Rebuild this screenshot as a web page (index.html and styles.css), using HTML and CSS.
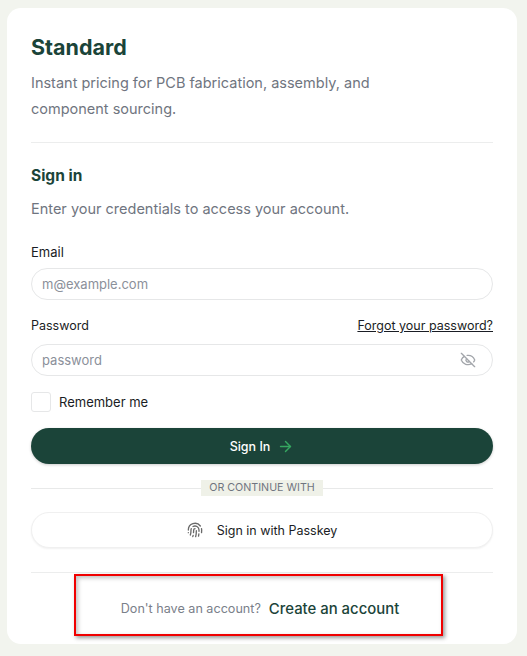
FILE: index.html
```html
<!DOCTYPE html>
<html lang="en">
<head>
  <meta charset="UTF-8" />
  <meta name="viewport" content="width=device-width, initial-scale=1.0"/>
  <title>Standard - Sign in</title>
  <link rel="stylesheet" href="styles.css">
</head>
<body>
  <div class="card">
    <h1>Standard</h1>
    <p class="intro">Instant pricing for PCB fabrication, assembly, and<br>component sourcing.</p>
    <hr class="rule">

    <h2>Sign in</h2>
    <p class="lead">Enter your credentials to access your account.</p>

    <form class="form">
      <div class="field">
        <label for="email">Email</label>
        <input type="text" id="email" placeholder="m@example.com" />
      </div>

      <div class="field field-password">
        <div class="label-row">
          <label for="password">Password</label>
          <a href="#">Forgot your password?</a>
        </div>
        <div class="input-wrap">
          <input type="text" id="password" placeholder="password" />
          <svg class="eye" viewBox="0 0 24 24" fill="none" stroke="currentColor" stroke-width="2" stroke-linecap="round" stroke-linejoin="round">
            <path d="M10.733 5.076a10.744 10.744 0 0 1 11.205 6.575 1 1 0 0 1 0 .696 10.747 10.747 0 0 1-1.444 2.49"/>
            <path d="M14.084 14.158a3 3 0 0 1-4.242-4.242"/>
            <path d="M17.479 17.499a10.75 10.75 0 0 1-15.417-5.151 1 1 0 0 1 0-.696 10.75 10.75 0 0 1 4.446-5.143"/>
            <path d="m2 2 20 20"/>
          </svg>
        </div>
      </div>

      <label class="remember">
        <span class="box"></span>
        Remember me
      </label>

      <button type="button" class="btn-primary">
        Sign In
        <svg viewBox="0 0 24 24" fill="none" stroke="#35a860" stroke-width="2" stroke-linecap="round" stroke-linejoin="round">
          <path d="M5 12h14"/>
          <path d="m12 5 7 7-7 7"/>
        </svg>
      </button>

      <div class="or"><span>OR CONTINUE WITH</span></div>

      <button type="button" class="btn-passkey">
        <svg viewBox="0 0 24 24" fill="none" stroke="#6a6a6a" stroke-width="2" stroke-linecap="round" stroke-linejoin="round">
          <path d="M12 10a2 2 0 0 0-2 2c0 1.02-.1 2.51-.26 4"/>
          <path d="M14 13.12c0 2.38 0 6.38-1 8.88"/>
          <path d="M17.29 21.02c.12-.6.43-2.3.5-3.02"/>
          <path d="M2 12a10 10 0 0 1 18-6"/>
          <path d="M2 16h.01"/>
          <path d="M21.8 16c.2-2 .131-5.354 0-6"/>
          <path d="M5 19.5C5.5 18 6 15 6 12a6 6 0 0 1 .34-2"/>
          <path d="M8.65 22c.21-.66.45-1.32.57-2"/>
          <path d="M9 6.8a6 6 0 0 1 9 5.2v2"/>
        </svg>
        Sign in with Passkey
      </button>
    </form>

    <hr class="rule rule-foot">

    <div class="foot">
      <span>Don't have an account?</span>
      <a href="#">Create an account</a>
    </div>

    <div class="callout"></div>
  </div>
</body>
</html>
```

FILE: styles.css
```css
* {
  box-sizing: border-box;
}

body {
  font-family: 'Inter', 'Liberation Sans', sans-serif;
  background: #f2f4ee;
  color: #1a1d24;
  margin: 0;
  padding: 8px 10px 12px 7px;
}

.card {
  position: relative;
  height: 636px;
  padding: 24px;
  background: #fff;
  border-radius: 14px;
}

h1 {
  margin: 0;
  font-size: 21.5px;
  line-height: 30px;
  font-weight: 700;
  color: #1b4439;
}

.intro {
  margin: 8px 0 0;
  font-size: 14.5px;
  line-height: 26px;
  color: #6f7580;
}

.rule {
  margin: 20px 0 0;
  border: none;
  border-top: 1px solid #eceded;
}

h2 {
  margin: 23px 0 0;
  font-size: 15.5px;
  line-height: 20px;
  font-weight: 700;
  color: #1b4439;
}

.lead {
  margin: 12px 0 0;
  font-size: 14.5px;
  line-height: 22px;
  color: #6f7580;
}

.form {
  display: flex;
  flex-direction: column;
  margin-top: 23px;
}

.field label,
.remember {
  font-size: 13px;
  line-height: 18px;
}

.field label {
  display: block;
}

.field-password label,
.label-row a {
  font-size: 12.5px;
}

.field input {
  display: block;
  width: 100%;
  height: 32px;
  margin-top: 7px;
  padding: 0 10px 1px;
  font-family: inherit;
  font-size: 13px;
  color: #1a1d24;
  background: #fff;
  border: 1px solid #e6e7e8;
  border-radius: 16px;
  outline: none;
}

.field input::placeholder {
  color: #8b909a;
  opacity: 1;
}

.field-password {
  margin-top: 17px;
}

.label-row {
  display: flex;
  justify-content: space-between;
  align-items: center;
  line-height: 18px;
}

.label-row a {
  color: #1a1d24;
}

.input-wrap {
  position: relative;
  padding-top: 2px;
}

.eye {
  position: absolute;
  right: 17px;
  top: 17px;
  width: 16px;
  height: 16px;
  color: #a3a6ab;
}

.remember {
  display: flex;
  align-items: center;
  gap: 8px;
  margin-top: 16px;
}

.box {
  width: 20px;
  height: 20px;
  border: 1px solid #e6e7e8;
  border-radius: 3px;
}

.btn-primary,
.btn-passkey {
  display: flex;
  align-items: center;
  justify-content: center;
  width: 100%;
  height: 36px;
  font-family: inherit;
  font-size: 12.5px;
  border-radius: 18px;
}

.btn-primary {
  gap: 7px;
  margin-top: 16px;
  color: #fff;
  font-weight: 500;
  background: #1b4439;
  border: none;
  box-shadow: 0 1px 3px rgba(0,0,0,0.2);
}

.btn-primary svg {
  width: 17px;
  height: 17px;
}

.or {
  display: flex;
  justify-content: center;
  margin-top: 16px;
  background: linear-gradient(#e8e9e9, #e8e9e9) center / 100% 1px no-repeat;
}

.or span {
  padding: 0 8px;
  font-size: 10.7px;
  line-height: 16px;
  color: #6f7580;
  background: #eff1e8;
}

.btn-passkey {
  gap: 14px;
  margin-top: 16px;
  color: #1a1d24;
  background: #fff;
  border: 1px solid #f0f0f0;
  box-shadow: 0 1px 2px rgba(0,0,0,0.06);
}

.btn-passkey svg {
  width: 16px;
  height: 16px;
}

.rule-foot {
  margin-top: 24px;
}

.foot {
  display: flex;
  justify-content: center;
  align-items: center;
  gap: 8px;
  margin-top: 26px;
  padding-right: 4px;
  font-size: 12.6px;
  line-height: 20px;
  color: #7a808a;
}

.foot a {
  font-size: 14.9px;
  font-weight: 500;
  color: #1b4439;
  text-decoration: none;
}

.callout {
  position: absolute;
  left: 67px;
  top: 566px;
  width: 369px;
  height: 62px;
  border: 2px solid #f00000;
  box-shadow: 2px 2px 4px rgba(0,0,0,0.4), inset 2px 2px 4px rgba(0,0,0,0.25);
}
```
